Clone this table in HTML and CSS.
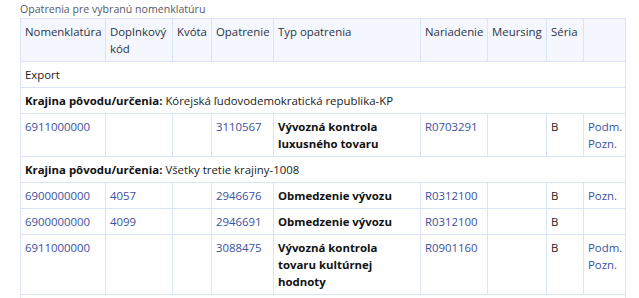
FILE: index.html
```html
<!DOCTYPE html>
<html lang="sk">
<head>
<meta charset="utf-8">
<link rel="stylesheet" href="styles.css">
</head>
<body>
<div class="wrap">
  <div class="caption">Opatrenia pre vybranú nomenklatúru</div>
  <table class="grid">
    <colgroup>
      <col class="c1"><col class="c2"><col class="c3"><col class="c4"><col class="c5"><col class="c6"><col class="c7"><col class="c8"><col class="c9">
    </colgroup>
    <thead>
      <tr>
        <th>Nomenklatúra</th><th>Doplnkový kód</th><th>Kvóta</th><th>Opatrenie</th><th>Typ opatrenia</th><th>Nariadenie</th><th>Meursing</th><th>Séria</th><th></th>
      </tr>
    </thead>
    <tbody>
      <tr><td colspan="9">Export</td></tr>
      <tr><td colspan="9"><b>Krajina pôvodu/určenia:</b> Kórejská ľudovodemokratická republika-KP</td></tr>
      <tr>
        <td><a href="#">6911000000</a></td><td></td><td></td><td><a href="#">3110567</a></td>
        <td><b>Vývozná kontrola luxusného tovaru</b></td><td><a href="#">R0703291</a></td><td></td><td>B</td>
        <td><a href="#">Podm.</a><br><a href="#">Pozn.</a></td>
      </tr>
      <tr><td colspan="9"><b>Krajina pôvodu/určenia:</b> Všetky tretie krajiny-1008</td></tr>
      <tr>
        <td><a href="#">6900000000</a></td><td><a href="#">4057</a></td><td></td><td><a href="#">2946676</a></td>
        <td><b>Obmedzenie vývozu</b></td><td><a href="#">R0312100</a></td><td></td><td>B</td>
        <td><a href="#">Pozn.</a></td>
      </tr>
      <tr>
        <td><a href="#">6900000000</a></td><td><a href="#">4099</a></td><td></td><td><a href="#">2946691</a></td>
        <td><b>Obmedzenie vývozu</b></td><td><a href="#">R0312100</a></td><td></td><td>B</td>
        <td></td>
      </tr>
      <tr>
        <td><a href="#">6911000000</a></td><td></td><td></td><td><a href="#">3088475</a></td>
        <td><b>Vývozná kontrola tovaru kultúrnej hodnoty</b></td><td><a href="#">R0901160</a></td><td></td><td>B</td>
        <td><a href="#">Podm.</a><br><a href="#">Pozn.</a></td>
      </tr>
      <tr><td colspan="9">&nbsp;</td></tr>
    </tbody>
  </table>
</div>
</body>
</html>
```
FILE: styles.css
```css
html, body {
  margin: 0;
  padding: 0;
  background: #ffffff;
}
body {
  font-family: "Open Sans", "Liberation Sans", sans-serif;
  font-size: 11.4px;
  line-height: 17px;
  color: #222;
}
.wrap {
  padding: 1px 0 0 20px;
  width: 606px;
}
.caption {
  color: #555a66;
  font-size: 10.6px;
}
.grid {
  border-collapse: collapse;
  table-layout: fixed;
  width: 606px;
}
.c1 { width: 85px; }
.c2 { width: 67px; }
.c3 { width: 39px; }
.c4 { width: 62px; }
.c5 { width: 147px; }
.c6 { width: 67px; }
.c7 { width: 59px; }
.c8 { width: 37px; }
.c9 { width: 42px; }
.grid th, .grid td {
  border: 1px solid #dbe4f6;
  padding: 4px 4px 4px 4px;
  text-align: left;
  vertical-align: top;
}
.grid th {
  background: #f4f7fd;
  font-weight: normal;
  color: #2b3347;
  height: 34px;
}
.grid td b {
  font-weight: bold;
  color: #111;
}
.grid a {
  color: #3a519e;
  text-decoration: none;
}
```
